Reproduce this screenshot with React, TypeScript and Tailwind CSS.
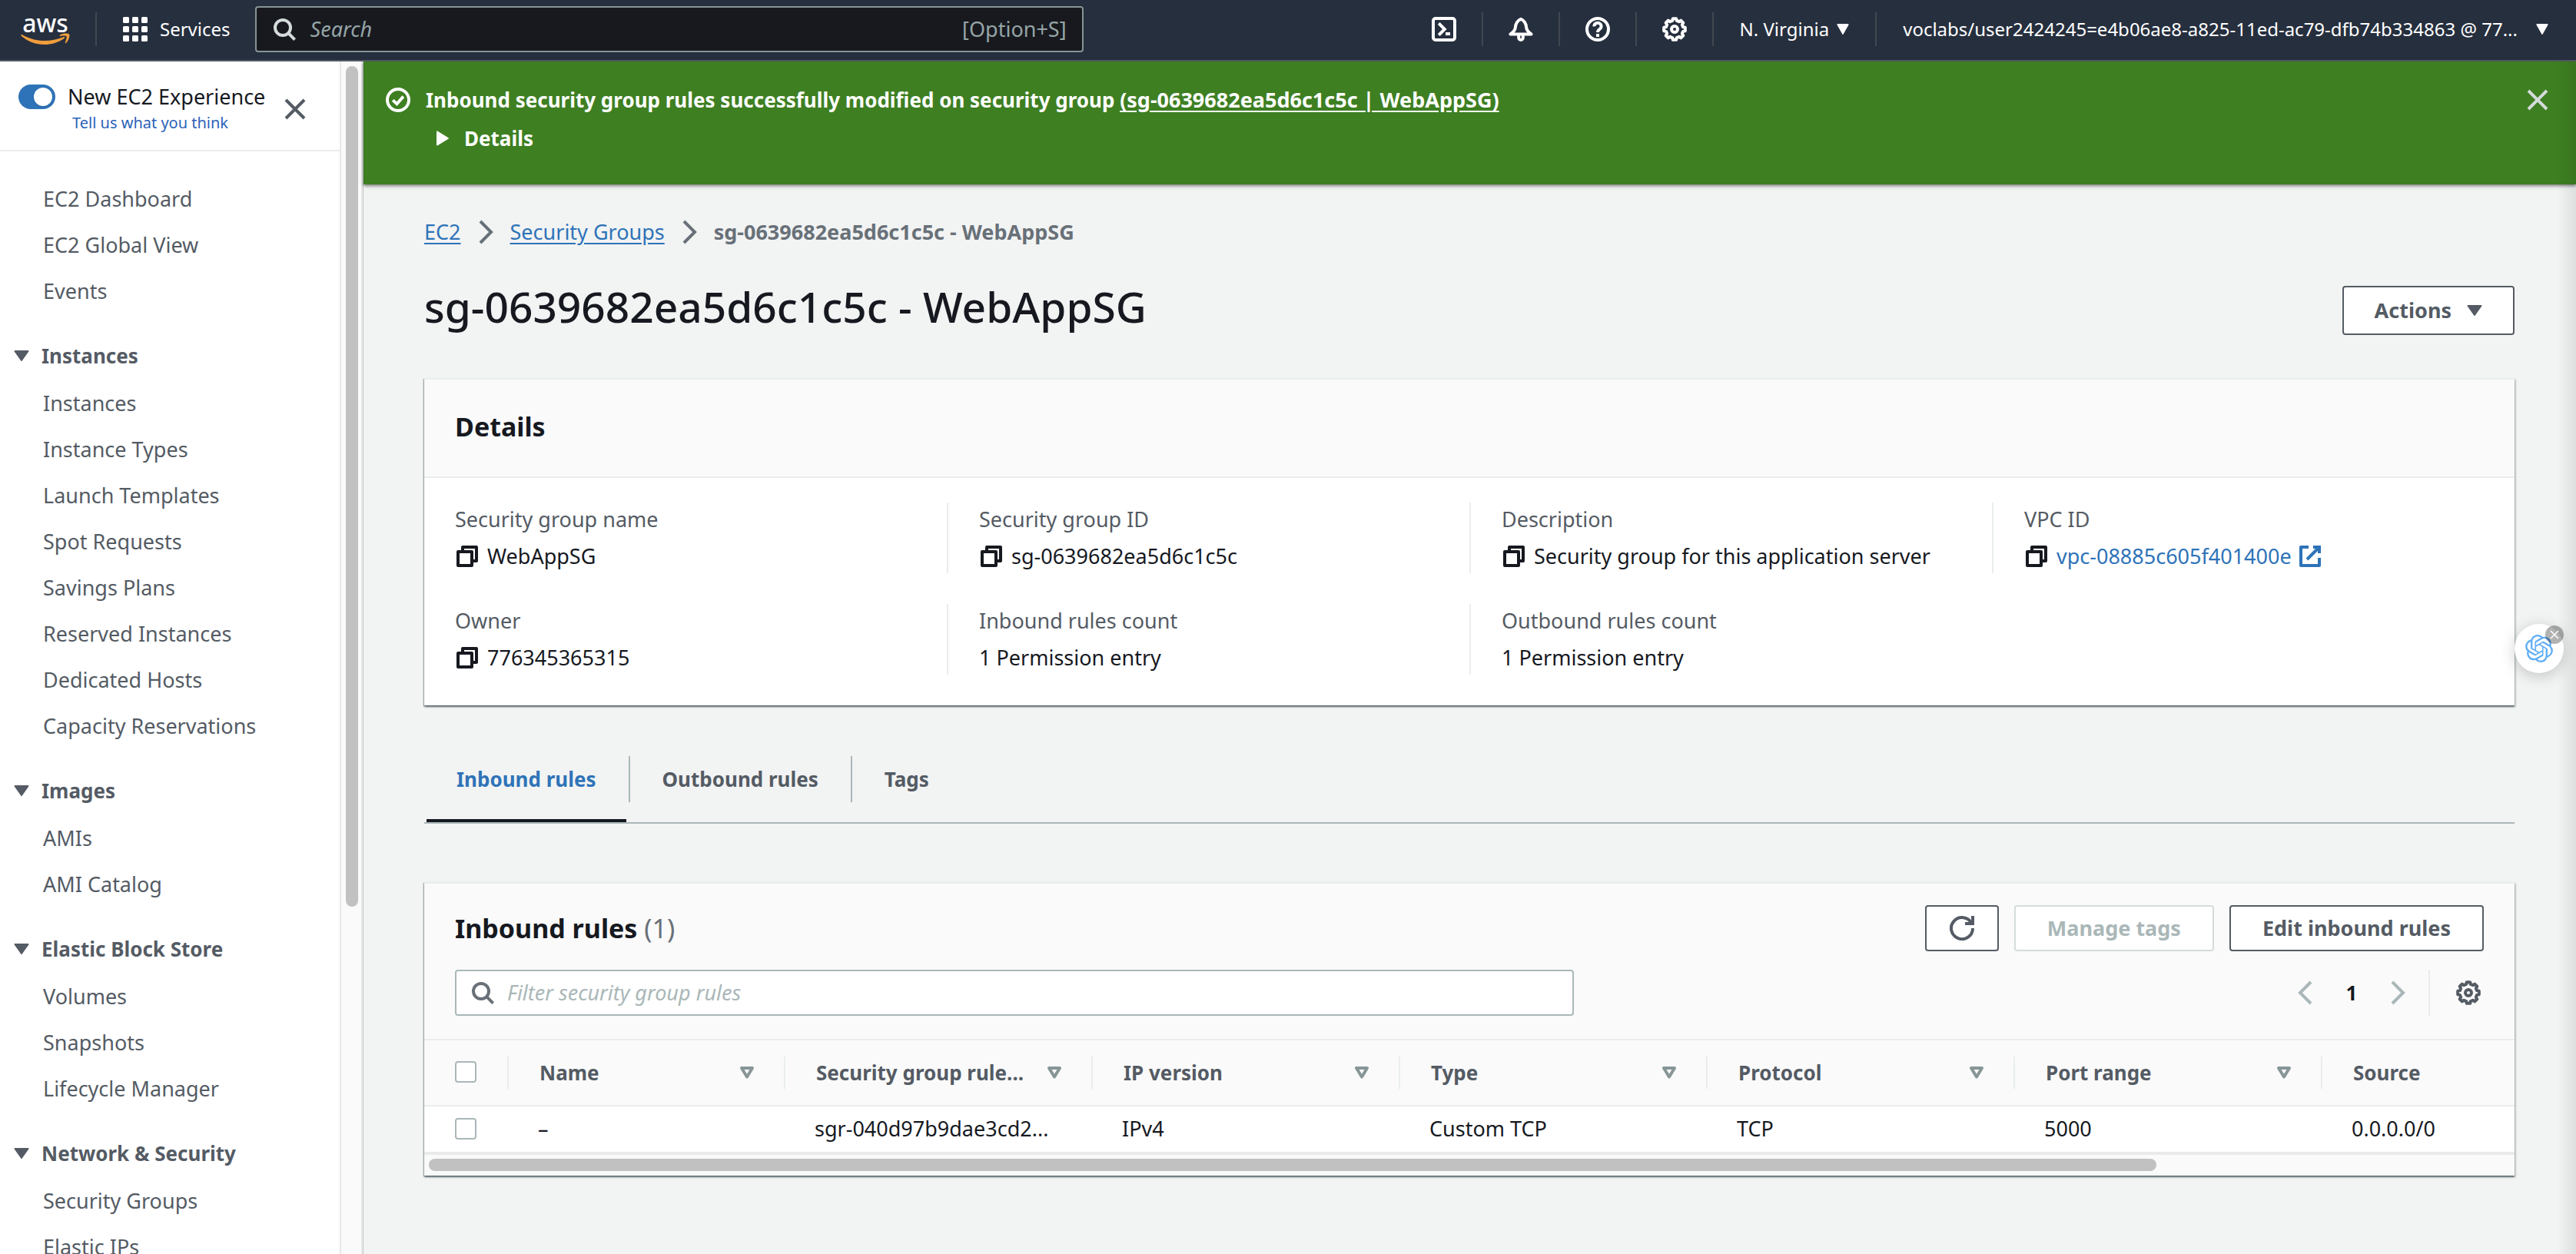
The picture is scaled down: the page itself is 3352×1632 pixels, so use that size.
import type { ReactNode } from "react";
import { SiOpenai } from "react-icons/si";

type IconProps = { className?: string; children: ReactNode };

function Icon({ className = "", children }: IconProps) {
  return (
    <svg
      viewBox="0 0 16 16"
      className={`size-8 shrink-0 ${className}`}
      fill="none"
      stroke="currentColor"
      strokeWidth={2}
      aria-hidden="true"
    >
      {children}
    </svg>
  );
}

const SearchIcon = ({ className = "" }: { className?: string }) => (
  <Icon className={className}>
    <circle cx="7" cy="7" r="5" />
    <path d="M10.6 10.6 14.8 14.8" />
  </Icon>
);

const CopyIcon = () => (
  <Icon>
    <path strokeLinejoin="round" d="M2 5h9v9H2z" />
    <path strokeLinejoin="round" d="M5 5V2h9v9h-3" />
  </Icon>
);

const ExternalIcon = () => (
  <Icon>
    <path d="M10 2h4v4M6 10l8-8" />
    <path strokeLinejoin="round" d="M14 9v5H2V2h5" />
  </Icon>
);

const RefreshIcon = () => (
  <Icon>
    <path d="M10 5h5V0" />
    <path d="M15 8a7 7 0 1 1-.7-3" />
  </Icon>
);

const CloseIcon = ({ className = "" }: { className?: string }) => (
  <Icon className={className}>
    <path d="M2 2l12 12M14 2 2 14" />
  </Icon>
);

const ChevronRight = ({ className = "" }: { className?: string }) => (
  <Icon className={className}>
    <path d="M4.5 1 11.5 8l-7 7" />
  </Icon>
);

const ChevronLeft = ({ className = "" }: { className?: string }) => (
  <Icon className={className}>
    <path d="M11.5 1 4.5 8l7 7" />
  </Icon>
);

function gearPath(outer: number, inner: number, teeth: number) {
  const points: string[] = [];
  const step = (Math.PI * 2) / teeth;
  for (let i = 0; i < teeth; i++) {
    const a = i * step - Math.PI / 2;
    const corners: [number, number][] = [
      [outer, -0.2],
      [outer, 0.2],
      [inner, 0.32],
      [inner, 0.68],
    ];
    for (const [r, t] of corners) {
      points.push(`${(8 + r * Math.cos(a + t * step)).toFixed(2)} ${(8 + r * Math.sin(a + t * step)).toFixed(2)}`);
    }
  }
  return `M${points.join("L")}Z`;
}

const GearIcon = () => (
  <Icon>
    <path strokeLinejoin="round" d={gearPath(7, 5.7, 8)} />
    <circle cx="8" cy="8" r="2" />
  </Icon>
);

const CloudShellIcon = () => (
  <Icon>
    <rect x="1" y="1" width="14" height="14" rx="1.5" />
    <path d="M4.6 4.2 8.4 8l-3.8 3.8M9 11h3" />
  </Icon>
);

const BellIcon = () => (
  <Icon>
    <path strokeLinejoin="round" d="M8 1.4C5.4 2.6 4.6 4.6 4.4 7 4.2 9 3 10 1.2 11.2h13.6C13 10 11.8 9 11.6 7 11.4 4.6 10.6 2.6 8 1.4Z" />
    <path d="M6.6 12v1.6a1.4 1.4 0 0 0 2.8 0V12" />
  </Icon>
);

const HelpIcon = () => (
  <Icon>
    <circle cx="8" cy="8" r="7" />
    <path d="M5.7 6.2a2.3 2.2 0 1 1 3.6 1.7C8.4 8.5 8 8.9 8 10" />
    <path d="M8 11v2" />
  </Icon>
);

const CheckCircleIcon = () => (
  <Icon>
    <circle cx="8" cy="8" r="7" />
    <path d="M4.6 8.2 7.2 10.6 11.4 5.8" />
  </Icon>
);

const CaretDown = ({ className = "w-5" }: { className?: string }) => (
  <svg viewBox="0 0 20 16" preserveAspectRatio="none" className={`h-4 shrink-0 ${className}`} fill="currentColor" aria-hidden="true">
    <path d="M1.5 1h17a1 1 0 0 1 .8 1.6L10.8 14.4a1 1 0 0 1-1.6 0L.7 2.6A1 1 0 0 1 1.5 1Z" />
  </svg>
);

const SortIcon = () => (
  <svg viewBox="0 0 20 18" className="h-[18px] w-5 shrink-0 text-[#879596]" fill="none" stroke="currentColor" strokeWidth={4} strokeLinejoin="round" aria-hidden="true">
    <path d="M3 3h14L10 14.5Z" />
  </svg>
);

const linkBlue = "text-[#2e73b8]";

function TopBar() {
  return (
    <header className="flex h-20 shrink-0 items-center border-b-2 border-[#545b64] bg-[#262f3e] pb-0.5 text-2xl text-white">
      <a href="#home" aria-label="AWS home" className="ml-[27px] flex w-16 flex-col items-center">
        <span className="text-[32px] leading-[26px] font-medium">aws</span>
        <svg viewBox="0 0 64 16" className="h-4 w-16 text-[#f09d3c]" fill="currentColor" aria-hidden="true">
          <path d="M.5 2.6C.9 2 1.6 2 2.3 2.4 19 11.6 37.5 12.2 55.5 5.2c1.4-.5 2.3.8 1.1 1.7C41 18 17 18.2.9 4 .4 3.5.3 3 .5 2.6Z" />
          <path d="M51 2.6C54.5.2 61 .1 62.9 1.3c1.5 1.5-.3 8.5-3.9 11.6-.8.6-1.5.2-1.2-.6 1-2.7 2.4-6.9 1.7-8-.8-1.1-5-.8-7.8-.4-.9.1-1.4-.8-.7-1.3Z" />
        </svg>
      </a>
      <div className="ml-[33px] h-11 w-0.5 bg-[#414750]" />
      <button type="button" className="ml-[34px] flex items-center gap-4">
        <svg viewBox="0 0 32 32" className="size-8" fill="currentColor" aria-hidden="true">
          {[0, 12, 24].map((y) => [0, 12, 24].map((x) => <rect key={`${x}-${y}`} x={x} y={y} width="8" height="8" rx="1.5" />))}
        </svg>
        Services
      </button>
      <label className="ml-8 flex h-[60px] w-[1078px] items-center gap-[18px] rounded border-2 border-[#879596] bg-[#18191f] px-5 text-[27px]">
        <SearchIcon className="text-[#d5dbdb]" />
        <input aria-label="Search" placeholder="Search" className="min-w-0 grow bg-transparent italic outline-none placeholder:text-[#95a5a6]" />
        <span className="text-[#95a5a6]">[Option+S]</span>
      </label>
      <div className="ml-auto flex items-center">
        {[
          { name: "CloudShell", icon: <CloudShellIcon /> },
          { name: "Notifications", icon: <BellIcon /> },
          { name: "Help", icon: <HelpIcon /> },
          { name: "Settings", icon: <GearIcon /> },
        ].map((item) => (
          <button key={item.name} type="button" aria-label={item.name} className="flex h-11 w-[100px] items-center justify-center border-r-2 border-[#414750]">
            {item.icon}
          </button>
        ))}
        <button type="button" className="flex h-11 items-center gap-2.5 border-r-2 border-[#414750] px-[34px]">
          N. Virginia <CaretDown className="w-4" />
        </button>
        <button type="button" className="flex h-11 items-center gap-6 pr-9 pl-[34px]">
          voclabs/user2424245=e4b06ae8-a825-11ed-ac79-dfb74b334863 @ 77... <CaretDown className="w-4" />
        </button>
      </div>
    </header>
  );
}

const topLinks = ["EC2 Dashboard", "EC2 Global View", "Events"];

const sections = [
  {
    title: "Instances",
    items: [
      "Instances",
      "Instance Types",
      "Launch Templates",
      "Spot Requests",
      "Savings Plans",
      "Reserved Instances",
      "Dedicated Hosts",
      "Capacity Reservations",
    ],
  },
  { title: "Images", items: ["AMIs", "AMI Catalog"] },
  { title: "Elastic Block Store", items: ["Volumes", "Snapshots", "Lifecycle Manager"] },
  { title: "Network & Security", items: ["Security Groups", "Elastic IPs"] },
];

function NavLinks({ items }: { items: string[] }) {
  return (
    <ul>
      {items.map((item) => (
        <li key={item}>
          <a href="#nav" className="block pt-0.5 pl-14 leading-[58px]">
            {item}
          </a>
        </li>
      ))}
    </ul>
  );
}

function Sidebar() {
  return (
    <aside className="flex w-[472px] shrink-0 overflow-hidden bg-white">
      <div className="grow">
        <div className="flex h-[117px] items-center border-b-2 border-[#eaeded] pt-2 pl-6">
          <div>
            <label className="flex items-center gap-4 text-[27px] leading-9 text-[#16191f]">
              <input type="checkbox" role="switch" defaultChecked className="peer sr-only" />
              <span className="flex h-8 w-12 items-center justify-end rounded-full bg-[#2e73b8] p-1">
                <span className="size-6 rounded-full bg-white shadow" />
              </span>
              New EC2 Experience
            </label>
            <a href="#feedback" className="ml-[70px] block text-xl leading-8 text-[#2b62b8]">
              Tell us what you think
            </a>
          </div>
          <button type="button" aria-label="Close navigation" className="ml-auto mr-[42px] text-[#545b64]">
            <CloseIcon />
          </button>
        </div>
        <nav className="pt-[31px] text-[27px] text-[#545b64]">
          <NavLinks items={topLinks} />
          {sections.map((section) => (
            <section key={section.title} className="mt-6">
              <button type="button" className="flex h-[62px] items-center gap-4 pl-[18px] text-[26px] font-bold">
                <CaretDown />
                {section.title}
              </button>
              <NavLinks items={section.items} />
            </section>
          ))}
        </nav>
      </div>
      <div className="w-[30px] shrink-0 border-x-2 border-[#e8e8e8] bg-[#fafafa] px-1.5 pt-1.5">
        <div className="h-[1094px] w-4 rounded-full bg-[#c1c1c1]" />
      </div>
    </aside>
  );
}

function Banner() {
  return (
    <div className="relative flex h-40 items-start bg-[#3e7f22] pt-[34px] pr-[34px] pl-[29px] text-[26px] font-bold text-white shadow-[0_2px_4px_rgba(0,0,0,0.5)]">
      <CheckCircleIcon />
      <div className="ml-5 leading-8">
        <p>
          Inbound security group rules successfully modified on security group{" "}
          <a href="#group" className="text-[27px] underline underline-offset-4">
            (sg-0639682ea5d6c1c5c | WebAppSG)
          </a>
        </p>
        <button type="button" className="mt-[18px] ml-[14px] flex items-center gap-5 leading-8">
          <svg viewBox="0 0 16 20" className="h-5 w-4" fill="currentColor" aria-hidden="true">
            <path d="M0 1.5A1 1 0 0 1 1.6.7L15.4 9.2a1 1 0 0 1 0 1.6L1.6 19.3A1 1 0 0 1 0 18.5Z" />
          </svg>
          Details
        </button>
      </div>
      <button type="button" aria-label="Dismiss" className="ml-auto text-[#d5dbdb]">
        <CloseIcon />
      </button>
    </div>
  );
}

function Field({ label, copy, children }: { label: string; copy?: boolean; children: ReactNode }) {
  return (
    <div className="flex flex-col gap-1 border-l-2 border-[#eaeded] pl-10 leading-[44px] nth-[4n+1]:border-transparent nth-[4n+1]:pl-[38px]">
      <dt className="text-[#545b64]">{label}</dt>
      <dd className="flex items-center gap-2.5 text-[#16191f]">
        {copy && (
          <button type="button" aria-label={`Copy ${label}`}>
            <CopyIcon />
          </button>
        )}
        {children}
      </dd>
    </div>
  );
}

const cardShadow = "shadow-[0_2px_2px_rgba(0,28,36,0.5),2px_2px_2px_rgba(0,28,36,0.15),-1px_1px_1px_rgba(0,28,36,0.25)]";

function Details() {
  return (
    <section className={`mt-14 border-t-2 border-[#eaeded] bg-white text-[27px] ${cardShadow}`}>
      <h2 className="border-b-2 border-[#eaeded] bg-[#fafafa] px-10 pt-10 pb-11 text-[34px] leading-[42px] font-bold text-[#16191f]">Details</h2>
      <dl className="grid grid-cols-4 gap-y-10 pt-8 pb-10">
        <Field label="Security group name" copy>
          WebAppSG
        </Field>
        <Field label="Security group ID" copy>
          sg-0639682ea5d6c1c5c
        </Field>
        <Field label="Description" copy>
          Security group for this application server
        </Field>
        <Field label="VPC ID" copy>
          <a href="#vpc" className={`flex items-center gap-2 ${linkBlue}`}>
            vpc-08885c605f401400e <ExternalIcon />
          </a>
        </Field>
        <Field label="Owner" copy>
          776345365315
        </Field>
        <Field label="Inbound rules count">1 Permission entry</Field>
        <Field label="Outbound rules count">1 Permission entry</Field>
      </dl>
    </section>
  );
}

function Tabs() {
  return (
    <div role="tablist" className="mt-[66px] flex border-b-2 border-[#aab7b8] text-[26px] font-bold text-[#545b64]">
      {["Inbound rules", "Outbound rules", "Tags"].map((tab, i) => (
        <div key={tab} className="group flex">
          <button
            type="button"
            role="tab"
            aria-selected={i === 0}
            className="mx-[3px] h-[86px] border-b-4 border-transparent px-[39px] pb-[22px] aria-selected:border-[#16191f] aria-selected:text-[#2e73b8]"
          >
            {tab}
          </button>
          <div className="h-[60px] w-0.5 bg-[#aab7b8] group-last:hidden" />
        </div>
      ))}
    </div>
  );
}

const columns = ["Name", "Security group rule...", "IP version", "Type", "Protocol", "Port range", "Source"];
const rule = ["–", "sgr-040d97b9dae3cd2...", "IPv4", "Custom TCP", "TCP", "5000", "0.0.0.0/0"];
const checkbox = "block size-7 appearance-none rounded border-2 border-[#aab7b8] bg-white";
const button = "h-[60px] rounded border-2 bg-white px-[41px] text-[27px] font-bold";

function Rules() {
  return (
    <section className={`mt-[76px] border-t-2 border-[#eaeded] bg-[#fafafa] text-[27px] ${cardShadow}`}>
      <div className="flex items-center gap-5 px-10 pt-7">
        <h2 className="mr-auto text-[34px] font-bold text-[#16191f]">
          Inbound rules <span className="font-normal text-[#687078]">(1)</span>
        </h2>
        <button type="button" aria-label="Refresh" className={`${button} border-[#545b64] !px-[30px] text-[#545b64]`}>
          <RefreshIcon />
        </button>
        <button type="button" disabled className={`${button} border-[#d5dbdb] text-[#aab7b8]`}>
          Manage tags
        </button>
        <button type="button" className={`${button} border-[#545b64] text-[#545b64]`}>
          Edit inbound rules
        </button>
      </div>
      <div className="flex items-center border-b-2 border-[#eaeded] px-10 pt-6 pb-[30px]">
        <label className="flex h-[60px] w-[calc(55%+4px)] items-center gap-4 rounded border-2 border-[#aab7b8] bg-white px-[18px] text-[#687078]">
          <SearchIcon />
          <input aria-label="Filter security group rules" placeholder="Filter security group rules" className="min-w-0 grow text-[27px] italic outline-none placeholder:text-[#aab7b8]" />
        </label>
        <div className="ml-auto flex h-[60px] items-center">
          <button type="button" aria-label="Previous page" className="flex w-[60px] justify-center text-[#aab7b8]">
            <ChevronLeft />
          </button>
          <button type="button" className="w-[60px] text-[26px] font-bold text-[#16191f]">
            1
          </button>
          <button type="button" aria-label="Next page" className="flex w-[60px] justify-center text-[#aab7b8]">
            <ChevronRight />
          </button>
          <div className="ml-2.5 h-full w-0.5 bg-[#eaeded]" />
          <button type="button" aria-label="Preferences" className="mr-1 ml-[34px] text-[#545b64]">
            <GearIcon />
          </button>
        </div>
      </div>
      <div className="overflow-hidden">
        <table className="w-full table-fixed text-left">
          <colgroup>
            <col className="w-[108px]" />
            <col className="w-[360px]" />
            <col className="w-[400px]" />
            <col className="w-[400px]" />
            <col className="w-[400px]" />
            <col className="w-[400px]" />
            <col className="w-[400px]" />
            <col />
          </colgroup>
          <thead>
            <tr className="h-[85px] border-b-2 border-[#eaeded] text-[26px] text-[#545b64]">
              <th className="pb-0.5 pl-10">
                <input type="checkbox" aria-label="Select all rules" className={checkbox} />
              </th>
              {columns.map((column) => (
                <th key={column} className="group">
                  <div className="flex h-[42px] items-center justify-between border-l-2 border-[#eaeded] pr-[38px] pl-10 whitespace-nowrap">
                    {column}
                    <span className="group-last:hidden">
                      <SortIcon />
                    </span>
                  </div>
                </th>
              ))}
            </tr>
          </thead>
          <tbody className="bg-white">
            <tr className="h-[62px] border-b-4 border-[#e9ebeb] text-[#16191f]">
              <td className="pb-0.5 pl-10">
                <input type="checkbox" aria-label="Select rule" className={checkbox} />
              </td>
              {rule.map((cell) => (
                <td key={cell} className="pl-10 whitespace-nowrap">
                  {cell}
                </td>
              ))}
            </tr>
          </tbody>
        </table>
      </div>
      <div className="h-[27px] px-1.5 pt-[5px]">
        <div className="h-4 w-[83%] rounded-full bg-[#c1c1c1]" />
      </div>
    </section>
  );
}

function Assistant() {
  return (
    <div className="fixed top-[812px] right-4 size-16">
      <button type="button" aria-label="Open assistant" className="flex size-16 items-center justify-center rounded-full bg-white text-[#62aef5] shadow-[0_4px_20px_rgba(0,0,0,0.2)]">
        <SiOpenai className="size-9" />
      </button>
      <button type="button" aria-label="Hide assistant" className="absolute top-0.5 right-0 flex size-6 items-center justify-center rounded-full bg-black/30 text-white">
        <svg viewBox="0 0 12 12" className="size-3" stroke="currentColor" strokeWidth={1.5} aria-hidden="true">
          <path d="M1 1l10 10M11 1 1 11" />
        </svg>
      </button>
    </div>
  );
}

export default function App() {
  return (
    <div className="flex h-screen flex-col overflow-hidden bg-[#f2f3f3] font-['Noto_Sans',sans-serif]">
      <TopBar />
      <div className="flex min-h-0 grow">
        <Sidebar />
        <main className="min-w-0 grow border-l border-[#c4c8ca]">
          <Banner />
          <div className="pt-10 pr-20 pl-[79px]">
            <nav aria-label="Breadcrumb" className="flex h-11 items-center gap-4 text-[27px] text-[#687078]">
              <a href="#ec2" className={`underline underline-offset-4 ${linkBlue}`}>
                EC2
              </a>
              <ChevronRight />
              <a href="#groups" className={`underline underline-offset-4 ${linkBlue}`}>
                Security Groups
              </a>
              <ChevronRight />
              <span className="font-bold">sg-0639682ea5d6c1c5c - WebAppSG</span>
            </nav>
            <div className="mt-12 flex h-16 items-start justify-between">
              <h1 className="text-[55px] leading-[54px] font-medium text-[#16191f]">sg-0639682ea5d6c1c5c - WebAppSG</h1>
              <button type="button" className="flex h-16 items-center gap-5 rounded border-2 border-[#545b64] bg-white px-10 text-[27px] font-bold text-[#545b64]">
                Actions <CaretDown />
              </button>
            </div>
            <Details />
            <Tabs />
            <Rules />
          </div>
        </main>
      </div>
      <div className="pointer-events-none fixed top-20 right-0 bottom-0 w-6 bg-linear-to-r from-transparent to-black/8" />
      <Assistant />
    </div>
  );
}
